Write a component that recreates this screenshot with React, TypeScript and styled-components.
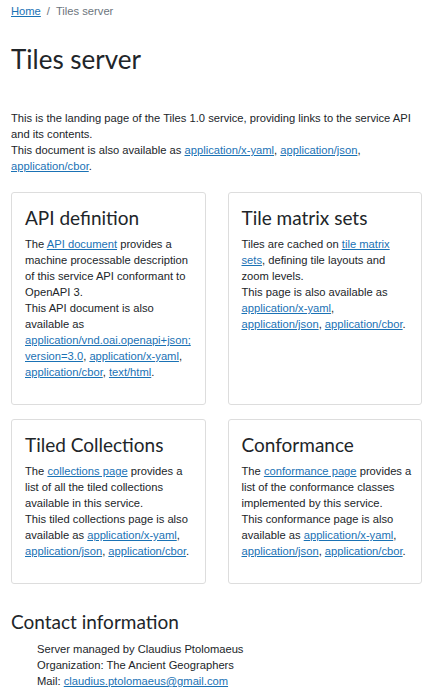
import styled, { createGlobalStyle } from "styled-components";

const GlobalStyle = createGlobalStyle`
  html, body {
    margin: 0;
    padding: 0;
    background: #ffffff;
  }
  body {
    font-family: "Liberation Sans", Arial, sans-serif;
    font-size: 11.2px;
    line-height: 16px;
    color: #212529;
  }
`;

interface Link {
  href: string;
  label: string;
}

const formats: Link[] = [
  { href: "#yaml", label: "application/x-yaml" },
  { href: "#json", label: "application/json" },
  { href: "#cbor", label: "application/cbor" },
];

const Formats = ({ items }: { items: Link[] }) => (
  <>
    {items.map((f, i) => (
      <span key={f.label}>
        <A href={f.href}>{f.label}</A>
        {i < items.length - 1 ? ", " : "."}
      </span>
    ))}
  </>
);

const App = () => {
  return (
    <Page>
      <GlobalStyle />
      <Breadcrumb>
        <A href="#home">Home</A>
        <Sep>/</Sep>
        <Current>Tiles server</Current>
      </Breadcrumb>
      <Title>Tiles server</Title>
      <Intro>
        This is the landing page of the Tiles 1.0 service, providing links to the service API and its contents.
        <br />
        This document is also available as <Formats items={formats} />
      </Intro>
      <Grid>
        <Card>
          <CardTitle>API definition</CardTitle>
          <CardText>
            The <A href="#api">API document</A> provides a machine processable description of this service API
            conformant to OpenAPI 3.
            <br />
            This API document is also available as{" "}
            <A href="#oas">
              application/vnd.oai.openapi+json;
              <wbr />
              version=3.0
            </A>
            , <A href="#yaml">application/x-yaml</A>, <A href="#cbor">application/cbor</A>,{" "}
            <A href="#html">text/html</A>.
          </CardText>
        </Card>
        <Card>
          <CardTitle>Tile matrix sets</CardTitle>
          <CardText>
            Tiles are cached on <A href="#tms">tile matrix sets</A>, defining tile layouts and zoom levels.
            <br />
            This page is also available as <Formats items={formats} />
          </CardText>
        </Card>
        <Card>
          <CardTitle>Tiled Collections</CardTitle>
          <CardText>
            The <A href="#collections">collections page</A> provides a list of all the tiled collections available
            in this service.
            <br />
            This tiled collections page is also available as <Formats items={formats} />
          </CardText>
        </Card>
        <Card>
          <CardTitle>Conformance</CardTitle>
          <CardText>
            The <A href="#conformance">conformance page</A> provides a list of the conformance classes implemented
            by this service.
            <br />
            This conformance page is also available as <Formats items={formats} />
          </CardText>
        </Card>
      </Grid>
      <SectionTitle>Contact information</SectionTitle>
      <Contact>
        <div>Server managed by Claudius Ptolomaeus</div>
        <div>Organization: The Ancient Geographers</div>
        <div>
          Mail: <A href="mailto:claudius.ptolomaeus@gmail.com">claudius.ptolomaeus@gmail.com</A>
        </div>
      </Contact>
    </Page>
  );
};

const Page = styled.div`
  padding: 3px 9px 8px 11px;
`;

const A = styled.a`
  color: #1a72b5;
  text-decoration: underline;
`;

const Breadcrumb = styled.nav`
  display: flex;
  align-items: center;
  gap: 6px;
  height: 16px;
`;

const Sep = styled.span`
  color: #6c757d;
`;

const Current = styled.span`
  color: #6c757d;
`;

const Title = styled.h1`
  margin: 23px 0 34px;
  font-family: Lato, "Liberation Sans", sans-serif;
  font-weight: 400;
  font-size: 26px;
  line-height: 34px;
`;

const Intro = styled.p`
  margin: 0 0 18px;
`;

const Grid = styled.div`
  display: grid;
  grid-template-columns: minmax(0, 1fr) minmax(0, 1fr);
  column-gap: 22px;
  row-gap: 14px;
`;

const Card = styled.section`
  border: 1px solid #dddddd;
  border-radius: 3px;
  padding: 11px 8px 24px 13px;
`;

const CardTitle = styled.h2`
  margin: 0 0 4px;
  font-family: Lato, "Liberation Sans", sans-serif;
  font-weight: 400;
  font-size: 19px;
  line-height: 28px;
`;

const CardText = styled.p`
  margin: 0;
`;

const SectionTitle = styled.h2`
  margin: 24px 0 5px;
  font-family: Lato, "Liberation Sans", sans-serif;
  font-weight: 400;
  font-size: 19px;
  line-height: 28px;
`;

const Contact = styled.div`
  padding-left: 26px;
`;

export default App;
